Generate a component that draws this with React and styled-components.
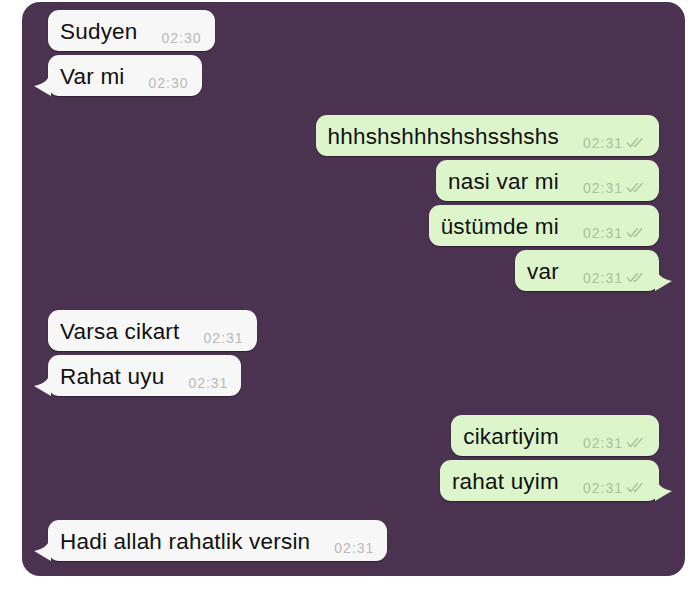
import styled, { createGlobalStyle } from 'styled-components';

const GlobalStyle = createGlobalStyle`
  html, body {
    margin: 0;
    padding: 0;
    background: #ffffff;
  }
  body {
    font-family: 'Liberation Sans', Arial, sans-serif;
  }
`;

const groups = [
  {
    out: false,
    items: [
      { text: 'Sudyen', time: '02:30' },
      { text: 'Var mi', time: '02:30' },
    ],
  },
  {
    out: true,
    items: [
      { text: 'hhhshshhhshshsshshs', time: '02:31' },
      { text: 'nasi var mi', time: '02:31' },
      { text: 'üstümde mi', time: '02:31' },
      { text: 'var', time: '02:31' },
    ],
  },
  {
    out: false,
    items: [
      { text: 'Varsa cikart', time: '02:31' },
      { text: 'Rahat uyu', time: '02:31' },
    ],
  },
  {
    out: true,
    items: [
      { text: 'cikartiyim', time: '02:31' },
      { text: 'rahat uyim', time: '02:31' },
    ],
  },
  {
    out: false,
    items: [{ text: 'Hadi allah rahatlik versin', time: '02:31' }],
  },
];

const DoubleCheck = () => (
  <svg width="20" height="11" viewBox="0 0 20 11" fill="none">
    <path d="M1.5 6 L4.5 9.5 L11.5 1.5" stroke="currentColor" strokeWidth="1.4" strokeLinecap="round" strokeLinejoin="round" />
    <path d="M8 8.5 L9 9.5 L16 1.5" stroke="currentColor" strokeWidth="1.4" strokeLinecap="round" strokeLinejoin="round" />
  </svg>
);

const Tail = ({ out }) => (
  <TailMark $out={out} width="18" height="26" viewBox="0 0 18 26">
    {out ? (
      <path d="M0 0 C1 8 6 14 17 16 C11 19 6 23 0 26 Z" />
    ) : (
      <path d="M18 0 C17 8 12 14 1 16 C7 19 12 23 18 26 Z" />
    )}
  </TailMark>
);

export default function App() {
  return (
    <>
      <GlobalStyle />
      <Page>
        <Chat>
          {groups.map((g, gi) => (
            <Group key={gi} $out={g.out}>
              {g.items.map((m, i) => (
                <Bubble key={i} $out={g.out}>
                  <Text>{m.text}</Text>
                  <Meta $out={g.out}>
                    <Time>{m.time}</Time>
                    {g.out && <DoubleCheck />}
                  </Meta>
                  {i === g.items.length - 1 && <Tail out={g.out} />}
                </Bubble>
              ))}
            </Group>
          ))}
        </Chat>
      </Page>
    </>
  );
}

const Page = styled.div`
  width: 690px;
  height: 592px;
  padding: 2px 5px 0 22px;
  box-sizing: border-box;
  background: #ffffff;
`;

const Chat = styled.div`
  height: 574px;
  background: #4a3250;
  border-radius: 18px;
  padding: 8px 26px 0 26px;
  box-sizing: border-box;
  display: flex;
  flex-direction: column;
  gap: 19px;
`;

const Group = styled.div`
  display: flex;
  flex-direction: column;
  align-items: ${(p) => (p.$out ? 'flex-end' : 'flex-start')};
  gap: 4px;
`;

const Bubble = styled.div`
  position: relative;
  height: 41px;
  box-sizing: border-box;
  padding: 9px 13px 0 12px;
  display: flex;
  align-items: baseline;
  border-radius: 11px;
  background: ${(p) => (p.$out ? '#ddf5cb' : '#f7f7f7')};
  box-shadow: 0 1px 1px rgba(0, 0, 0, 0.4);
  color: #111111;
`;

const Text = styled.span`
  font-size: 22.5px;
  letter-spacing: 0.2px;
  line-height: 26px;
  white-space: nowrap;
`;

const Meta = styled.span`
  display: inline-flex;
  align-items: center;
  gap: 3px;
  margin-left: 24px;
  position: relative;
  top: 4px;
  color: ${(p) => (p.$out ? '#a8c29a' : '#b9b9b9')};

  svg {
    position: relative;
    top: -1px;
  }
`;

const Time = styled.span`
  font-size: 14px;
  letter-spacing: 1px;
  line-height: 16px;
`;

const TailMark = styled.svg`
  position: absolute;
  bottom: 0;
  ${(p) => (p.$out ? 'right: -14px;' : 'left: -15px;')}
  fill: ${(p) => (p.$out ? '#ddf5cb' : '#f7f7f7')};
`;
